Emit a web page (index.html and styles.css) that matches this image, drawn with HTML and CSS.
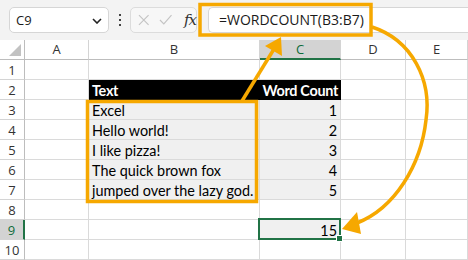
FILE: index.html
```html
<!DOCTYPE html>
<html>
<head>
    <title>WORDCOUNT example</title>
    <link rel="stylesheet" href="styles.css">
</head>
<body>
    <div class="app">
        <div class="formula-bar">
            <div class="name-box">
                <span>C9</span>
                <svg class="chevron" width="10" height="6" viewBox="0 0 10 6"><path d="M1 1 L5 5 L9 1" fill="none" stroke="#222" stroke-width="1.6"/></svg>
            </div>
            <div class="dots"><i></i><i></i><i></i></div>
            <div class="fx-box">
                <svg width="12" height="12" viewBox="0 0 12 12"><path d="M1 1 L11 11 M11 1 L1 11" stroke="#c4c4c4" stroke-width="1.2"/></svg>
                <svg width="14" height="12" viewBox="0 0 14 12"><path d="M1 6 L5 10 L13 1" fill="none" stroke="#c4c4c4" stroke-width="1.2"/></svg>
                <span class="fx">fx</span>
            </div>
            <div class="formula-input">=WORDCOUNT(B3:B7)</div>
        </div>

        <div class="sheet">
            <!-- column headers -->
            <div class="corner"><span class="tri"></span></div>
            <div class="hd">A</div>
            <div class="hd">B</div>
            <div class="hd sel">C</div>
            <div class="hd">D</div>
            <div class="hd">E</div>

            <div class="rh">1</div><div class="c"></div><div class="c"></div><div class="c"></div><div class="c"></div><div class="c"></div>

            <div class="rh">2</div><div class="c"></div>
            <div class="c th">Text</div><div class="c th num">Word Count</div>
            <div class="c"></div><div class="c"></div>

            <div class="rh">3</div><div class="c"></div>
            <div class="c td">Excel</div><div class="c td num">1</div>
            <div class="c"></div><div class="c"></div>

            <div class="rh">4</div><div class="c"></div>
            <div class="c td">Hello world!</div><div class="c td num">2</div>
            <div class="c"></div><div class="c"></div>

            <div class="rh">5</div><div class="c"></div>
            <div class="c td">I like pizza!</div><div class="c td num">3</div>
            <div class="c"></div><div class="c"></div>

            <div class="rh">6</div><div class="c"></div>
            <div class="c td">The quick brown fox</div><div class="c td num">4</div>
            <div class="c"></div><div class="c"></div>

            <div class="rh">7</div><div class="c"></div>
            <div class="c td">jumped over the lazy god.</div><div class="c td num">5</div>
            <div class="c"></div><div class="c"></div>

            <div class="rh">8</div><div class="c"></div><div class="c"></div><div class="c"></div><div class="c"></div><div class="c"></div>

            <div class="rh sel-row">9</div><div class="c"></div><div class="c"></div>
            <div class="c td num active">15</div>
            <div class="c"></div><div class="c"></div>

            <div class="rh">10</div><div class="c"></div><div class="c"></div><div class="c"></div><div class="c"></div><div class="c"></div>
        </div>

        <!-- annotations drawn over the sheet -->
        <svg class="notes" width="468" height="260" viewBox="0 0 468 260">
            <g fill="none" stroke="#f6a800" stroke-width="3.5">
                <rect x="200" y="4.5" width="171" height="30.5"/>
                <rect x="87.5" y="101.5" width="169" height="100"/>
                <path d="M242 101 L274 49"/>
                <path d="M372 27 C412 40 432 80 426 120 C421 165 395 208 357 223"/>
            </g>
            <g fill="#f6a800">
                <polygon points="281,37 282,56 265,46"/>
                <polygon points="342,229 357,212 361,234"/>
            </g>
        </svg>
    </div>
</body>
</html>
```

FILE: styles.css
```css
body {
    margin: 0;
    background: #ffffff;
    font-family: "Open Sans", "Noto Sans", sans-serif;
    overflow: hidden;
}

.app {
    position: relative;
    width: 468px;
    height: 260px;
    overflow: hidden;
}

/* Formula bar */
.formula-bar {
    height: 40px;
    background: #f3f3f3;
    display: flex;
    align-items: center;
    padding-left: 9px;
    box-sizing: border-box;
}

.name-box {
    width: 100px;
    height: 26px;
    box-sizing: border-box;
    background: #fff;
    border: 1px solid #d6d6d6;
    border-radius: 5px;
    display: flex;
    align-items: center;
    justify-content: space-between;
    padding: 0 6px 0 6px;
    font-size: 13px;
    color: #1a1a1a;
}

.chevron {
    margin-top: 1px;
}

.dots {
    width: 21px;
    display: flex;
    flex-direction: column;
    align-items: center;
    gap: 3px;
}

.dots i {
    display: block;
    width: 2px;
    height: 2px;
    background: #444;
}

.fx-box {
    width: 67px;
    height: 26px;
    box-sizing: border-box;
    background: #f7f7f7;
    border: 1px solid #dcdcdc;
    border-radius: 5px;
    display: flex;
    align-items: center;
    padding-left: 7px;
    gap: 9px;
}

.fx {
    font-family: "DejaVu Serif", "Liberation Serif", serif;
    font-style: italic;
    font-size: 15px;
    color: #333;
    margin-left: 3px;
    letter-spacing: -1px;
}

.formula-input {
    margin-left: 11px;
    flex: 1;
    height: 26px;
    box-sizing: border-box;
    background: #fff;
    border: 1px solid #d6d6d6;
    border-right: none;
    border-radius: 5px 0 0 5px;
    padding-left: 10px;
    font-size: 14px;
    line-height: 24px;
    color: #1a1a1a;
}

/* Sheet grid */
.sheet {
    display: grid;
    grid-template-columns: 25px 64px 171px 81px 65px 62px;
    grid-template-rows: repeat(11, 20px);
}

.sheet > div {
    box-sizing: border-box;
}

.corner {
    position: relative;
    background: #fff;
    border-right: 1px solid #bdbdbd;
    border-bottom: 1px solid #bdbdbd;
}

.tri {
    position: absolute;
    right: 3px;
    bottom: 3px;
    width: 0;
    height: 0;
    border-left: 12px solid transparent;
    border-bottom: 12px solid #c2c2c2;
}

.hd {
    background: #fff;
    border-right: 1px solid #d4d4d4;
    border-bottom: 1px solid #bdbdbd;
    text-align: center;
    font-size: 13px;
    line-height: 19px;
    color: #333;
}

.hd.sel {
    background: #d3d3d3;
    border-bottom: 2px solid #217346;
    color: #0f6b3a;
}

.rh {
    background: #fff;
    border-right: 1px solid #bdbdbd;
    border-bottom: 1px solid #d4d4d4;
    text-align: center;
    font-size: 13px;
    line-height: 20px;
    color: #333;
}

.rh.sel-row {
    background: #d3d3d3;
    border-right: 2px solid #217346;
    color: #0f6b3a;
}

.c {
    border-right: 1px solid #dadada;
    border-bottom: 1px solid #dadada;
    font-family: "Lato", "Open Sans", sans-serif;
    font-size: 14.4px;
    line-height: 19px;
    padding: 1px 3px 0 3px;
    color: #000;
    white-space: nowrap;
}

.th {
    background: #000;
    color: #fff;
    font-weight: bold;
    border-color: #000;
    letter-spacing: -0.3px;
}

.th.num {
    padding-left: 0;
    padding-right: 2px;
}

.td {
    background: #f0f0f0;
}

.num {
    text-align: right;
}

.active {
    position: relative;
}

.active::after {
    content: '';
    position: absolute;
    left: -2px;
    top: -2px;
    right: -1px;
    bottom: -1px;
    border: 2px solid #217346;
}

.active::before {
    content: '';
    position: absolute;
    right: -3px;
    bottom: -3px;
    width: 5px;
    height: 5px;
    background: #217346;
    border: 1px solid #fff;
    z-index: 1;
}

/* Annotations */
.notes {
    position: absolute;
    left: 0;
    top: 0;
    pointer-events: none;
}
```
